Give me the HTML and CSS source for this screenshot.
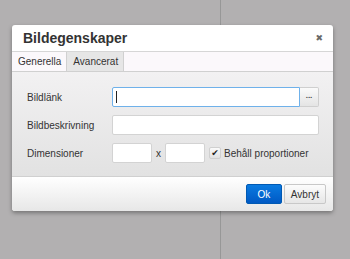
FILE: index.html
```html
<!DOCTYPE html>
<html lang="sv">
<head>
    <meta charset="UTF-8">
    <title>Bildegenskaper</title>
    <link rel="stylesheet" href="styles.css">
</head>
<body>
    <div class="dialog">
        <div class="dialog-head">
            <span class="dialog-title">Bildegenskaper</span>
            <span class="dialog-close">&#10006;</span>
        </div>
        <div class="tabs">
            <span class="tab active">Generella</span>
            <span class="tab">Avancerat</span>
        </div>
        <form class="dialog-body">
            <label for="src">Bildlänk</label>
            <div class="field-row">
                <div class="input-wrap">
                    <input id="src" type="text" class="text-input focused">
                    <span class="caret"></span>
                </div>
                <button type="button" class="browse-btn">...</button>
            </div>
            <label for="alt">Bildbeskrivning</label>
            <input id="alt" type="text" class="text-input">
            <label for="width">Dimensioner</label>
            <div class="field-row">
                <input id="width" type="text" class="text-input small">
                <span class="times">x</span>
                <input id="height" type="text" class="text-input small">
                <span class="checkbox">&#10004;</span>
                <span class="check-label">Behåll proportioner</span>
            </div>
        </form>
        <div class="dialog-foot">
            <button type="button" class="btn btn-primary">Ok</button>
            <button type="button" class="btn">Avbryt</button>
        </div>
    </div>
</body>
</html>
```

FILE: styles.css
```css
body {
    margin: 0;
    height: 259px;
    font-family: 'Liberation Sans', Arial, sans-serif;
    font-size: 10px;
    color: #333;
    background: linear-gradient(to right, transparent 220px, #979797 220px, #979797 221px, transparent 221px), #b2b0b1;
    overflow: hidden;
}
.dialog {
    width: 321px;
    margin: 25px 0 0 12px;
    background: #fff;
    border-radius: 3px;
    box-shadow: 0 2px 4px rgba(0, 0, 0, 0.35);
    overflow: hidden;
}
.dialog-head {
    height: 26px;
    padding: 0 10px 0 11px;
    display: flex;
    align-items: center;
    justify-content: space-between;
    border-bottom: 1px solid #d6d6d6;
}
.dialog-title {
    font-size: 14px;
    font-weight: bold;
    color: #333;
}
.dialog-close {
    font-size: 9px;
    font-weight: bold;
    color: #6a6a6a;
    font-family: 'DejaVu Sans', sans-serif;
}
.tabs {
    display: flex;
    height: 19px;
    background: #fbf8fb;
    border-bottom: 1px solid #d0d0d0;
}
.tab {
    padding: 0 5px 0 6px;
    line-height: 19px;
    color: #333;
}
.tab:not(.active) {
    background: #e6e6e6;
    border-left: 1px solid #d0d0d0;
    border-right: 1px solid #d0d0d0;
}
.dialog-body {
    margin: 0;
    padding: 15px 14px 13px 15px;
    display: grid;
    grid-template-columns: 85px 1fr;
    row-gap: 8px;
    align-items: center;
    background: linear-gradient(#f2f1f2, #e2e2e2);
}
.field-row {
    display: flex;
    align-items: center;
}
.input-wrap {
    position: relative;
    flex: 1;
    display: flex;
}
.text-input {
    box-sizing: border-box;
    width: 100%;
    height: 20px;
    margin: 0;
    padding: 0 4px;
    border: 1px solid #d3d3d3;
    border-radius: 2px;
    background: #fff;
    font: inherit;
}
.text-input.focused {
    border-color: #6fb1ea;
    border-radius: 2px 0 0 2px;
}
.caret {
    position: absolute;
    left: 4px;
    top: 4px;
    width: 1px;
    height: 12px;
    background: #222;
}
.text-input.small {
    width: 40px;
}
.browse-btn {
    box-sizing: border-box;
    width: 19px;
    height: 20px;
    margin: 0;
    padding: 0 0 4px;
    border: 1px solid #cfcfcf;
    border-left: none;
    border-radius: 0 2px 2px 0;
    background: linear-gradient(#fafafa, #e4e4e4);
    font: bold 8px 'Liberation Sans', Arial, sans-serif;
    color: #444;
}
.times {
    width: 13px;
    text-align: center;
}
.checkbox {
    box-sizing: border-box;
    width: 12px;
    height: 12px;
    margin: 0 3px 0 4px;
    border: 1px solid #d0d0d0;
    border-radius: 2px;
    background: linear-gradient(#fafafa, #e2e2e2);
    font-size: 9px;
    font-weight: bold;
    line-height: 10px;
    text-align: center;
    color: #222;
    font-family: 'DejaVu Sans', sans-serif;
}
.dialog-foot {
    height: 34px;
    padding: 0 7px;
    display: flex;
    align-items: center;
    justify-content: flex-end;
    gap: 2px;
    border-top: 1px solid #d0d0d0;
    background: linear-gradient(#fff, #e7e7e7);
}
.btn {
    height: 20px;
    margin: 0;
    padding: 0 6px;
    border: 1px solid #c8c8c8;
    border-radius: 2px;
    background: linear-gradient(#fcfcfc, #e6e6e6);
    font: 10px 'Liberation Sans', Arial, sans-serif;
    color: #333;
}
.btn-primary {
    width: 36px;
    border-color: #0059b3;
    background: linear-gradient(#0a7ae0, #0059c4);
    color: #fff;
}
```
